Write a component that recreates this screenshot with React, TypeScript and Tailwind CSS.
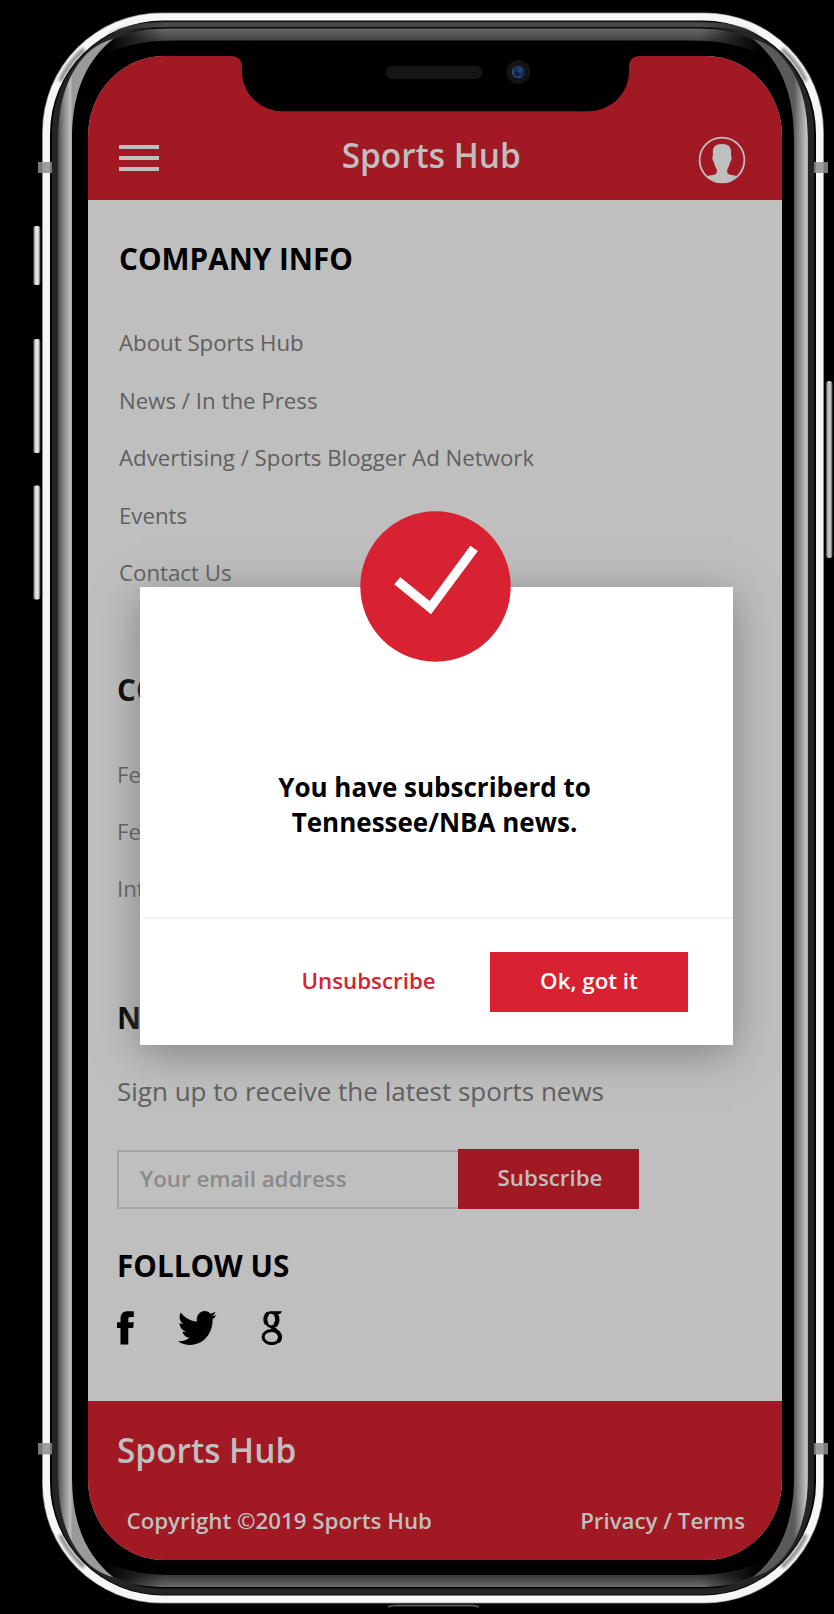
import React from "react";
import { FaTwitter } from "react-icons/fa";

const companyLinks = [
  "About Sports Hub",
  "News / In the Press",
  "Advertising / Sports Blogger Ad Network",
  "Events",
  "Contact Us",
];

const communityLinks = ["Features", "Feedback", "Internship"];

const SIDE =
  "M113 39 C83 46 58 82 58 138 V1478 C58 1534 83 1570 113 1577 C90 1558 72 1530 72 1476 V140 C72 86 90 58 113 39 Z";

function PhoneFrame() {
  return (
    <svg
      className="pointer-events-none absolute inset-0"
      width="834"
      height="1614"
      viewBox="0 0 834 1614"
      fill="none"
      aria-hidden="true"
    >
      <defs>
        <linearGradient id="left" x1="58" x2="72" y1="0" y2="0" gradientUnits="userSpaceOnUse">
          <stop offset="0" stopColor="#4c4c4c" />
          <stop offset="0.35" stopColor="#808080" />
          <stop offset="0.9" stopColor="#bdbdbd" />
          <stop offset="1" stopColor="#9a9a9a" />
        </linearGradient>
        <linearGradient id="right" x1="72" x2="58" y1="0" y2="0" gradientUnits="userSpaceOnUse">
          <stop offset="0" stopColor="#5a5a5a" />
          <stop offset="0.3" stopColor="#808080" />
          <stop offset="0.9" stopColor="#c4c4c4" />
          <stop offset="1" stopColor="#9a9a9a" />
        </linearGradient>
        <linearGradient id="top" x1="0" x2="0" y1="28" y2="41" gradientUnits="userSpaceOnUse">
          <stop offset="0" stopColor="#6a6a6a" />
          <stop offset="1" stopColor="#404040" />
        </linearGradient>
        <linearGradient id="bottom" x1="0" x2="0" y1="1575" y2="1587" gradientUnits="userSpaceOnUse">
          <stop offset="0" stopColor="#383838" />
          <stop offset="1" stopColor="#6a6a6a" />
        </linearGradient>
        <linearGradient id="fade" x1="105" x2="761" y1="0" y2="0" gradientUnits="userSpaceOnUse">
          <stop offset="0" stopColor="#000" />
          <stop offset="0.09" stopColor="#fff" />
          <stop offset="0.91" stopColor="#fff" />
          <stop offset="1" stopColor="#000" />
        </linearGradient>
        <mask id="ends" maskUnits="userSpaceOnUse" x="0" y="0" width="834" height="1614">
          <rect width="834" height="1614" fill="url(#fade)" />
        </mask>
        <clipPath id="rim">
          <rect x="42.500" y="13" width="781" height="1590" rx="119" />
        </clipPath>
        <linearGradient id="button" x1="0" x2="1" y1="0" y2="0">
          <stop offset="0" stopColor="#555" />
          <stop offset="0.3" stopColor="#d8d8d8" />
          <stop offset="0.65" stopColor="#eee" />
          <stop offset="1" stopColor="#555" />
        </linearGradient>
        <filter id="soft" x="-50%" y="-50%" width="200%" height="200%">
          <feGaussianBlur stdDeviation="1.5" />
        </filter>
      </defs>

      {/* steel rim */}
      <rect x="42" y="12.500" width="782" height="1591" rx="119.500" fill="#777" />
      <rect x="42.800" y="13.300" width="780.400" height="1589.400" rx="118.500" fill="#f6f6f6" />
      <g filter="url(#soft)" stroke="#6a6a6a" strokeOpacity="0.8" strokeWidth="4" clipPath="url(#rim)">
        <path d="M60 81 C66 68 74 58 84 49" />
        <path d="M806 81 C800 68 792 58 782 49" />
        <path d="M60 1535 C66 1548 74 1558 84 1567" />
        <path d="M806 1535 C800 1548 792 1558 782 1567" />
      </g>
      <rect x="50" y="20.500" width="766" height="1575" rx="113" fill="#000" />
      <rect x="55" y="24.500" width="756" height="1567" rx="107" stroke="#242424" strokeWidth="6" />
      <path
        d="M105 35 C125 26 145 24.500 170 24.500 H696 C721 24.500 741 26 761 35"
        stroke="#4a4a4a"
        strokeWidth="4.500"
        mask="url(#ends)"
      />

      {/* inner bezel reflections */}
      <path
        d="M105 42 C125 31 145 28.500 170 28.500 H696 C721 28.500 741 31 761 42 L761 54 C735 43 715 40.500 690 40.500 H176 C150 40.500 130 43 105 54 Z"
        fill="url(#top)"
        mask="url(#ends)"
      />
      <path
        d="M105 1574 C125 1585 145 1587 170 1587 H696 C721 1587 741 1585 761 1574 L761 1562 C735 1573 715 1575 690 1575 H176 C150 1575 130 1573 105 1562 Z"
        fill="url(#bottom)"
        mask="url(#ends)"
      />
      <path d={SIDE} fill="url(#left)" />
      <path d={SIDE} fill="url(#right)" transform="translate(866 0) scale(-1 1)" />

      {/* antenna bands */}
      <g fill="#8e8e8e" fillOpacity="0.85">
        <rect x="38" y="162" width="14" height="11" />
        <rect x="814" y="162" width="14" height="11" />
        <rect x="38" y="1443" width="14" height="11.500" />
        <rect x="814" y="1443" width="14" height="11.500" />
      </g>

      {/* hardware buttons */}
      <g fill="url(#button)">
        <rect x="33.300" y="226" width="7" height="59" rx="2.500" />
        <rect x="33.300" y="339" width="7" height="114" rx="2.500" />
        <rect x="33.300" y="485.500" width="7" height="114" rx="2.500" />
        <rect x="826" y="381" width="6.500" height="177" rx="3" opacity="0.85" />
      </g>
      <path d="M388 1607 Q391 1605.500 396 1605.500 H471 Q476 1605.500 479 1607" stroke="#555" strokeWidth="1.800" />
    </svg>
  );
}

function Notch() {
  return (
    <svg
      className="absolute left-1/2 top-0 -ml-[204px]"
      width="409"
      height="56"
      viewBox="231 56 409 56"
      aria-hidden="true"
    >
      <defs>
        <radialGradient id="lens" cx="0.65" cy="0.35" r="0.7">
          <stop offset="0" stopColor="#234f86" />
          <stop offset="0.55" stopColor="#14284c" />
          <stop offset="1" stopColor="#2b5f9c" />
        </radialGradient>
        <pattern id="grille" width="2" height="2" patternUnits="userSpaceOnUse">
          <rect width="2" height="2" fill="#171717" />
          <rect width="1" height="1" fill="#101010" />
        </pattern>
      </defs>
      <path d="M231 56 C238 56 242 60 242 67 V73 C243 94 260 111 283 111.300 H588 C611 111 628 94 629 73 V67 C629 60 633 56 640 56 Z" />
      <rect x="385.500" y="65.800" width="96.700" height="13.200" rx="6.600" fill="url(#grille)" />
      <circle cx="518.500" cy="71.900" r="12" fill="#131313" />
      <circle cx="518.300" cy="71.700" r="6.400" fill="url(#lens)" />
      <circle cx="516.500" cy="74" r="2.600" fill="#0c1a36" opacity="0.8" />
    </svg>
  );
}

function ProfileIcon() {
  return (
    <svg width="48" height="48" viewBox="0 0 48 48" aria-hidden="true">
      <circle cx="24" cy="24" r="22.400" fill="none" stroke="#bfbfbf" strokeWidth="1.800" />
      <path
        fill="#bfbfbf"
        d="M24 8 C30.500 8 33 10.800 33.200 16 L33 20.300 C34.200 20.500 33.600 25 32.200 25.800 C31.500 29.500 30.300 31.500 29.200 33.500 V36.500 C30.500 39.600 36 39 39.800 40.300 A22.600 22.600 0 0 1 8.200 40.300 C12 39 17.500 39.600 18.800 36.500 V33.500 C17.700 31.500 16.500 29.500 15.800 25.800 C14.400 25 13.800 20.500 15 20.300 L14.800 16 C15 10.800 17.500 8 24 8 Z"
      />
    </svg>
  );
}

function FacebookIcon() {
  return (
    <svg width="17" height="34" viewBox="0 0 17 34" aria-hidden="true">
      <path d="M16.800 0.300 V6 H13.500 C11.700 6 11.300 6.900 11.300 8.300 V11.300 H16.800 L16.200 17 H11.300 V33.600 H3.500 V17 H0 V11.300 H3.500 V7.700 C3.500 2.800 6.200 0.300 10.800 0.300 Z" />
    </svg>
  );
}

function GoogleIcon() {
  return (
    <svg width="22" height="34" viewBox="0 0 22 34" aria-hidden="true">
      <path d="M10 0.300 H21 L19.200 3 H14 Z" />
      <g fill="none" stroke="#000">
        <ellipse cx="10.300" cy="8.600" rx="6" ry="7.200" strokeWidth="2.600" transform="rotate(-12 10.300 8.600)" />
        <path d="M5.700 13 C3.400 9.500 4 4.500 7 2.500" strokeWidth="4" />
        <path d="M15 3.500 C17 7 16.800 12 14 14.500" strokeWidth="4.400" />
        <path d="M12.500 14.800 C10.500 16.800 12 17.600 15 19.200" strokeWidth="3.600" />
        <ellipse cx="10.700" cy="26" rx="8.600" ry="6.600" strokeWidth="3" />
        <path d="M14.500 19.800 C20 22.500 20 28 17 30.500" strokeWidth="4" />
      </g>
    </svg>
  );
}

function Heading({ children }: { children: React.ReactNode }) {
  return <h2 className="whitespace-nowrap text-[29.7px] font-bold leading-10 text-black">{children}</h2>;
}

function LinkList({ items }: { items: string[] }) {
  return (
    <ul className="whitespace-nowrap text-[22.25px] leading-[57.4px] text-[#606060]">
      {items.map((item) => (
        <li key={item}>{item}</li>
      ))}
    </ul>
  );
}

function SubscribedDialog() {
  return (
    <div
      role="dialog"
      className="absolute left-[51.5px] top-[531px] flex h-[458px] w-[593px] flex-col bg-white shadow-[0_8px_40px_rgba(108,108,108,0.75)]"
    >
      <svg
        className="absolute -top-[76px] left-[220.3px]"
        width="151"
        height="151"
        viewBox="0 0 151 151"
        aria-hidden="true"
      >
        <circle cx="75.500" cy="75.500" r="75.200" fill="#d82131" />
        <path d="M34.200 73.300 L40.300 66.300 L69.700 90 L110.300 34.700 L117.900 40.100 L71 103.300 Z" fill="#fff" />
      </svg>
      <p className="mt-[182.5px] pr-[3px] text-center text-[26px] font-bold leading-[35.5px] text-black">
        You have subscriberd to
        <br />
        Tennessee/NBA news.
      </p>
      <div className="ml-[2.5px] mt-auto flex h-[128px] items-start border-t-2 border-[#f2f2f9] pl-[159.5px] pt-[33px] text-[22.3px] font-semibold">
        <button className="h-[60px] w-[136px] pb-[2px] text-left text-[#d82131]">Unsubscribe</button>
        <button className="ml-[52.5px] h-[59.5px] w-[198px] bg-[#d82131] pb-[2px] text-white">Ok, got it</button>
      </div>
    </div>
  );
}

export default function App() {
  return (
    <div className="relative h-[1614px] w-[834px] overflow-hidden bg-black pl-[88px] pt-[56px] font-['Open_Sans',sans-serif]">
      <PhoneFrame />
      <div className="relative flex h-[1504px] w-[694px] flex-col overflow-hidden rounded-[76px/80px] bg-[#bfbfbf]">
        <header className="flex h-36 shrink-0 items-start justify-between bg-[#a01923] pl-[31px] pr-[35.5px] pt-[80px]">
          <div className="mt-[9px] flex w-10 flex-col gap-[7px]">
            <span className="h-1 bg-[#bfbfbf]" />
            <span className="h-1 bg-[#bfbfbf]" />
            <span className="h-1 bg-[#bfbfbf]" />
          </div>
          <h1 className="-mt-[5px] ml-[5px] text-[33.4px] font-semibold leading-[48px] text-[#bfbfbf]">
            Sports Hub
          </h1>
          <ProfileIcon />
        </header>
        <Notch />

        <main className="flex grow flex-col pl-[29px] pt-[38.5px]">
          <section className="flex flex-col gap-[35.8px] pl-0.5">
            <Heading>COMPANY INFO</Heading>
            <LinkList items={companyLinks} />
          </section>
          <section className="mt-[68.5px] flex flex-col gap-[35.8px]">
            <Heading>COMMUNITY</Heading>
            <LinkList items={communityLinks} />
          </section>
          <section className="mt-20">
            <Heading>NEWSLETTER</Heading>
            <p className="mt-[35.5px] whitespace-nowrap text-[26px] leading-9 text-[#606060]">
              Sign up to receive the latest sports news
            </p>
            <form className="mt-[39.5px] flex h-[60px] w-[522px] text-[22.3px] font-semibold">
              <div className="mt-px flex grow items-center border-2 border-r-0 border-[#a3a3a3] pb-0.5 pl-[21px] text-[#8a8a8a]">
                Your email address
              </div>
              <button type="button" className="w-[181px] bg-[#a01923] pb-0.5 pl-[3px] text-[#bfbfbf]">
                Subscribe
              </button>
            </form>
          </section>
          <section className="mt-[37px]">
            <Heading>FOLLOW US</Heading>
            <div className="mt-[25.5px] flex">
              <FacebookIcon />
              <FaTwitter
                className="ml-[44px] h-[34px] w-[38.5px] text-black"
                viewBox="0 48 512 416"
                preserveAspectRatio="none"
              />
              <div className="ml-[44px]">
                <GoogleIcon />
              </div>
            </div>
          </section>
        </main>

        <footer className="h-[159px] shrink-0 bg-[#a01923] pl-[29px] pr-[37px] font-semibold text-[#bfbfbf]">
          <p className="pt-[25px] text-[33.4px] leading-[48px]">Sports Hub</p>
          <div className="mt-[31px] flex justify-between pl-[9.5px] text-[22.3px] leading-8">
            <span>Copyright ©2019 Sports Hub</span>
            <span>Privacy / Terms</span>
          </div>
        </footer>

        <SubscribedDialog />
      </div>
    </div>
  );
}
